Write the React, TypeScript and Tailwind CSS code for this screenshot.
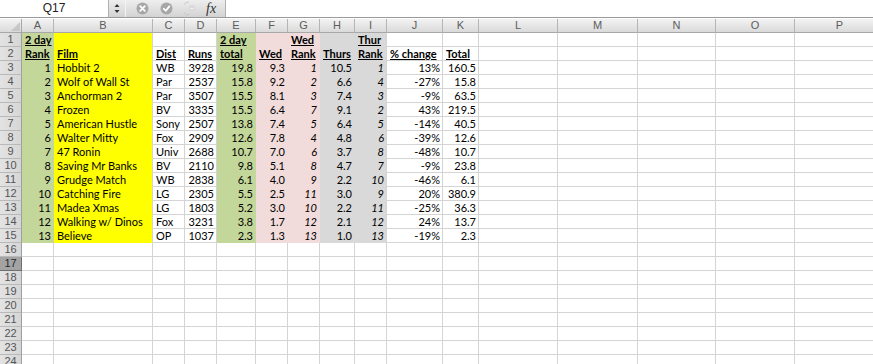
import React from "react";

const W = [
  "w-[32px]",
  "w-[99px]",
  "w-[32px]",
  "w-[32px]",
  "w-[39px]",
  "w-[32px]",
  "w-[32px]",
  "w-[35px]",
  "w-[32px]",
  "w-[56px]",
  "w-[36px]",
  "w-[79px]",
  "w-[80px]",
  "w-[78px]",
  "w-[79px]",
  "w-[90px]",
];
const LETTERS = ["A", "B", "C", "D", "E", "F", "G", "H", "I", "J", "K", "L", "M", "N", "O", "P"];

const GREEN = "bg-[#c4d79b] border-b-[#c4d79b] border-r-[#c4d79b]";
const YELLOW = "bg-[#ffff00] border-b-[#ffff00]";
const PINK = "bg-[#f2dcdb] border-b-[#f2dcdb] border-r-[#f2dcdb]";
const GRAY = "bg-[#d9d9d9] border-b-[#d9d9d9] border-r-[#d9d9d9]";
const GRAY_END = "bg-[#d9d9d9] border-b-[#d9d9d9]";
const FILLS = [GREEN, YELLOW, "", "", GREEN, PINK, PINK, GRAY, GRAY_END, "", ""];

type Row = (string | number)[];
const DATA: Row[] = [
  [1, "Hobbit 2", "WB", 3928, "19.8", "9.3", 1, "10.5", 1, "13%", "160.5"],
  [2, "Wolf of Wall St", "Par", 2537, "15.8", "9.2", 2, "6.6", 4, "-27%", "15.8"],
  [3, "Anchorman 2", "Par", 3507, "15.5", "8.1", 3, "7.4", 3, "-9%", "63.5"],
  [4, "Frozen", "BV", 3335, "15.5", "6.4", 7, "9.1", 2, "43%", "219.5"],
  [5, "American Hustle", "Sony", 2507, "13.8", "7.4", 5, "6.4", 5, "-14%", "40.5"],
  [6, "Walter Mitty", "Fox", 2909, "12.6", "7.8", 4, "4.8", 6, "-39%", "12.6"],
  [7, "47 Ronin", "Univ", 2688, "10.7", "7.0", 6, "3.7", 8, "-48%", "10.7"],
  [8, "Saving Mr Banks", "BV", 2110, "9.8", "5.1", 8, "4.7", 7, "-9%", "23.8"],
  [9, "Grudge Match", "WB", 2838, "6.1", "4.0", 9, "2.2", 10, "-46%", "6.1"],
  [10, "Catching Fire", "LG", 2305, "5.5", "2.5", 11, "3.0", 9, "20%", "380.9"],
  [11, "Madea Xmas", "LG", 1803, "5.2", "3.0", 10, "2.2", 11, "-25%", "36.3"],
  [12, "Walking w/ Dinos", "Fox", 3231, "3.8", "1.7", 12, "2.1", 12, "24%", "13.7"],
  [13, "Believe", "OP", 1037, "2.3", "1.3", 13, "1.0", 13, "-19%", "2.3"],
];

const ROW1: Row = ["2 day", "", "", "", "2 day", "", "Wed", "", "Thur", "", ""];
const ROW2: Row = ["Rank", "Film", "Dist", "Runs", "total", "Wed", "Rank", "Thurs", "Rank", "% change", "Total"];

const LEFT_COLS = [1, 2];
const ITALIC_COLS = [6, 8];

function RowHeader({ n, selected }: { n: number; selected?: boolean }) {
  return (
    <div
      className={
        selected
          ? "w-[22px] shrink-0 h-[14px] bg-[#a3a3a3] border-b border-r border-[#6f6f6f] text-[#2a2a2a] text-center leading-[13px] text-[11px] font-['Liberation_Sans',sans-serif]"
          : "w-[22px] shrink-0 h-[14px] bg-gradient-to-r from-[#e3e3e3] to-[#d6d6d6] border-b border-[#b9b9b9] border-r border-r-[#9f9f9f] text-[#555] text-center leading-[13px] text-[11px] font-['Liberation_Sans',sans-serif]"
      }
    >
      {n}
    </div>
  );
}

function Cell({ c, r, value, header }: { c: number; r: number; value?: string | number; header?: boolean }) {
  const fill = r <= 15 && c < FILLS.length ? FILLS[c] : "";
  const isEmptyRow1 = r === 1 && (c === 2 || c === 3);
  const fillCls = isEmptyRow1 ? "" : fill;
  let align = "text-right pr-[2px]";
  if (header || LEFT_COLS.includes(c)) align = "text-left pl-[3px]";
  const style = header
    ? "font-bold underline decoration-1 underline-offset-[1px]"
    : ITALIC_COLS.includes(c)
    ? "italic"
    : "";
  return (
    <div
      className={`${W[c]} shrink-0 h-[14px] border-r border-b border-[#d4d4d4] ${fillCls} ${align} ${style} overflow-hidden whitespace-nowrap leading-[13px] text-[11px] text-black`}
    >
      {value === undefined || value === "" ? "" : value}
    </div>
  );
}

function SheetRow({ r, values, header }: { r: number; values?: Row; header?: boolean }) {
  return (
    <div className="flex h-[14px]">
      <RowHeader n={r} selected={r === 17} />
      {W.map((_, c) => (
        <Cell key={c} c={c} r={r} value={values ? values[c] : undefined} header={header} />
      ))}
    </div>
  );
}

function TopBar() {
  return (
    <div className="flex h-[18px] border-b border-[#9a9a9a] bg-gradient-to-b from-[#eeeeee] to-[#d3d3d3]">
      <div className="w-[109px] shrink-0 bg-white border-r border-[#b0b0b0] text-center text-[12px] leading-[17px] text-[#222] font-['Liberation_Sans',sans-serif]">
        Q17
      </div>
      <div className="w-[17px] shrink-0 flex items-center justify-center border-r border-[#f4f4f4]">
        <svg width="6" height="11" viewBox="0 0 6 11">
          <path d="M3 1 L5.5 4 L0.5 4 Z" fill="#333" />
          <path d="M3 10 L5.5 7 L0.5 7 Z" fill="#333" />
        </svg>
      </div>
      <div className="flex items-center gap-[11px] pl-[10px] w-[99px] shrink-0">
        <svg width="13" height="13" viewBox="0 0 13 13">
          <circle cx="6.5" cy="6.5" r="6" fill="#a7a7a7" />
          <path d="M4.2 4.2 L8.8 8.8 M8.8 4.2 L4.2 8.8" stroke="#fff" strokeWidth="1.8" strokeLinecap="round" />
        </svg>
        <svg width="13" height="13" viewBox="0 0 13 13">
          <circle cx="6.5" cy="6.5" r="6" fill="#a7a7a7" />
          <path d="M3.8 6.8 L5.8 8.7 L9.3 4.4" stroke="#fff" strokeWidth="1.8" fill="none" strokeLinecap="round" strokeLinejoin="round" />
        </svg>
        <svg width="12" height="15" viewBox="0 0 12 15">
          <path d="M5 1 A 6.5 6.5 0 0 0 5 14" stroke="#c8c8c8" strokeWidth="1" fill="none" />
          <circle cx="8" cy="7.5" r="3.5" fill="#dadada" />
          <path d="M6.5 7.5 L9.5 7.5" stroke="#f5f5f5" strokeWidth="1" />
        </svg>
        <span className="font-['Liberation_Serif',serif] italic text-[14px] leading-[17px] text-[#333] -ml-[1px]">
          fx
        </span>
      </div>
      <div className="flex-1 bg-white border-l border-[#b0b0b0]" />
    </div>
  );
}

function ColumnHeader() {
  return (
    <div className="flex h-[15px] border-t border-white">
      <div className="w-[22px] shrink-0 h-[14px] relative bg-gradient-to-b from-[#f3f3f3] to-[#dadada] border-b border-r border-[#a8a8a8]">
        <svg className="absolute right-[1px] bottom-[1px]" width="9" height="9" viewBox="0 0 9 9">
          <path d="M9 0 L9 9 L0 9 Z" fill="#c7c7c7" />
        </svg>
      </div>
      {W.map((w, c) => (
        <div
          key={c}
          className={`${w} shrink-0 h-[14px] bg-gradient-to-b from-[#f3f3f3] to-[#dadada] border-b border-[#a8a8a8] border-r border-r-[#b5b5b5] text-center text-[11px] leading-[13px] text-[#5c5c5c] font-['Liberation_Sans',sans-serif]`}
        >
          {LETTERS[c]}
        </div>
      ))}
    </div>
  );
}

export default function App() {
  const rows: React.ReactNode[] = [];
  rows.push(<SheetRow key={1} r={1} values={ROW1} header />);
  rows.push(<SheetRow key={2} r={2} values={ROW2} header />);
  DATA.forEach((d, i) => rows.push(<SheetRow key={i + 3} r={i + 3} values={d} />));
  for (let r = 16; r <= 24; r++) rows.push(<SheetRow key={r} r={r} />);
  return (
    <div className="w-[873px] h-[364px] overflow-hidden bg-white font-['Lato',sans-serif]">
      <TopBar />
      <ColumnHeader />
      <div className="flex flex-col">{rows}</div>
    </div>
  );
}
